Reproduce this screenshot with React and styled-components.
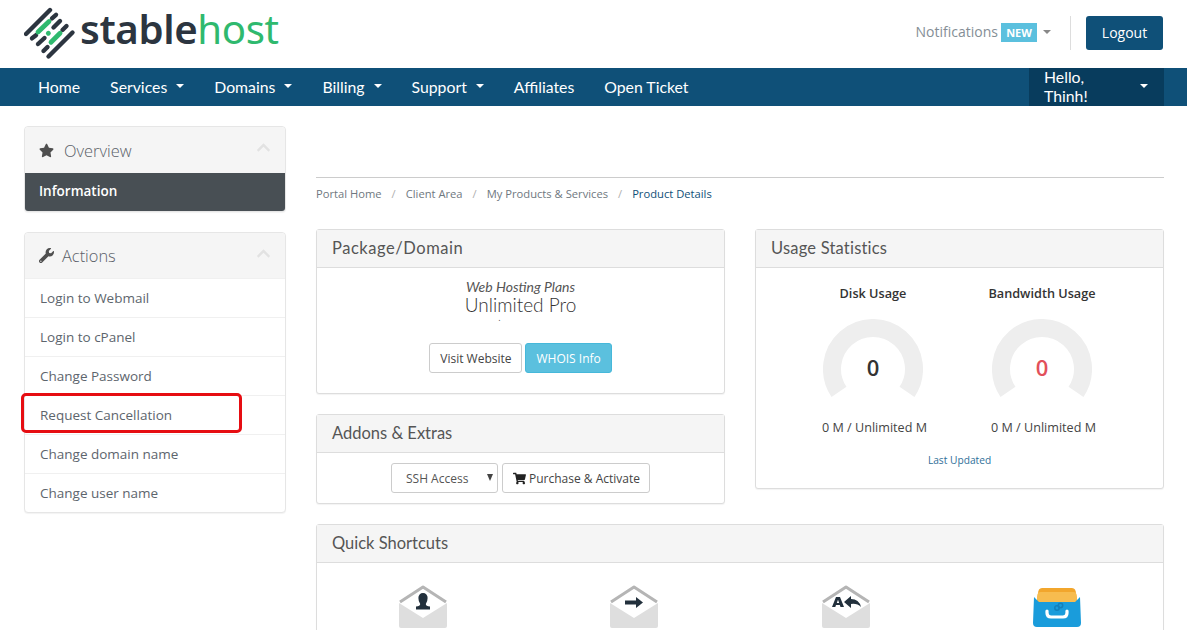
import React from "react";
import styled, { createGlobalStyle } from "styled-components";
import { FaStar, FaWrench, FaShoppingCart, FaChevronUp } from "react-icons/fa";

const Global = createGlobalStyle`
  html, body { margin: 0; padding: 0; background: #fff; overflow: hidden; }
  * { box-sizing: border-box; }
  #root { width: 1187px; height: 630px; overflow: hidden; font-family: "Open Sans", sans-serif; color: #333; }
`;

const Display = `"Lato", "Open Sans", sans-serif`;

const Header = styled.header`
  height: 68px; display: flex; align-items: flex-start; justify-content: space-between; padding: 0 24px;
`;
const Logo = styled.div`display: flex; align-items: center; height: 62px; gap: 0;`;
const LogoText = styled.div`
  font-family: "Noto Sans", sans-serif; font-size: 40.2px; line-height: 62px; letter-spacing: -0.4px;
  margin-top: -4px; margin-left: 3px; font-weight: 600; color: #2c3540;
  span { font-weight: 400; color: #2fb96e; }
`;
const HeaderRight = styled.div`display: flex; align-items: center; height: 34px; margin-top: 16px;`;
const Notif = styled.div`display: flex; align-items: center; font-size: 14px; color: #848e96; margin-right: 19px; margin-top: -2px; line-height: 19px;`;
const NotifText = styled.span`position: relative; top: -1px;`;
const NewBadge = styled.span`
  background: #5bc0de; color: #fff; font-size: 11px; font-weight: 700; height: 19px; line-height: 19px; width: 36px;
  text-align: center; margin-left: 3px;
`;
const Caret = styled.span`
  display: inline-block; width: 0; height: 0; border-left: 4px solid transparent; border-right: 4px solid transparent;
  border-top: 4px solid ${p => p.$color || "#fff"}; margin-left: ${p => p.$gap || 9}px;
`;
const VDivider = styled.div`width: 1px; height: 34px; background: #ddd; margin-right: 15px;`;
const LogoutBtn = styled.button`
  width: 77px; height: 34px; background: #0f5078; color: #fff; border: 0; border-radius: 3px; padding: 0 0 2px;
  font: 400 14px "Open Sans", sans-serif;
`;
const Nav = styled.nav`
  height: 38px; background: #0f5078; display: flex; justify-content: space-between; padding: 0 23px 0 23px;
`;
const NavList = styled.div`display: flex;`;
const NavItem = styled.a`
  display: flex; align-items: center; padding: 0 15px 2px; font: 400 15.8px ${Display}; color: #fff;
`;
const Hello = styled(NavItem)`width: 135px; background: #083c5d; justify-content: space-between; padding-right: 16px;`;

const Content = styled.div`
  display: grid; grid-template-columns: 262px 848px; column-gap: 30px; padding: 20px 0 0 24px;
`;
const Side = styled.aside`display: flex; flex-direction: column; gap: 20px;`;
const SidePanel = styled.section`
  border: 1px solid #e6e6e6; border-radius: 4px; background: #fff; box-shadow: 0 1px 1px rgba(0,0,0,.05);
`;
const SideHead = styled.div`
  height: ${p => p.$h}px; background: #f5f5f5; display: flex; align-items: center; padding: 0 14px; gap: ${p => p.$gap}px;
  font: 300 16.4px "Open Sans", sans-serif; color: #5a6068; border-radius: 4px 4px 0 0;
  > svg:first-child { color: #4f4f4f; font-size: 15px; }
  > svg:last-child { margin-left: auto; color: #e2e2e2; font-size: 15px; margin-top: -5px; }
`;
const ActiveItem = styled.div`
  height: 38px; background: #484f54; color: #fff; font-size: 13.5px; font-weight: 600; display: flex; align-items: center;
  padding: 0 0 2px 14px; border-radius: 0 0 3px 3px;
`;
const MenuItem = styled.div`
  position: relative; height: 39px; border-top: 1px solid #f0f0f0; font-size: 13.5px; color: #5d656d; display: flex; align-items: center;
  padding: 0 0 1px 15px;
  &:first-of-type { border-top: 0; }
`;
const RedMark = styled.span`
  position: absolute; left: -4px; top: -3px; width: 221px; height: 40px; border: 3px solid #e60d12; border-radius: 5px;
`;

const Main = styled.main`padding-top: 51px;`;
const Crumbs = styled.div`
  border-top: 1px solid #ccc; height: 52px; padding-top: 8px; font-size: 11.2px; color: #6f7880; display: flex; gap: 10px; line-height: 15px;
  span { color: #b0b0b0; }
  b { font-weight: 400; color: #0f5078; }
`;
const Cols = styled.div`display: grid; grid-template-columns: 409px 409px; column-gap: 30px; align-items: start;`;
const Stack = styled.div`display: flex; flex-direction: column; gap: 20px;`;
const Panel = styled.section`
  border: 1px solid #ddd; border-radius: 3px; background: #fff; box-shadow: 0 1px 1px rgba(0,0,0,.05);
`;
const PanelHead = styled.div`
  height: 38px; background: #f5f5f5; border-bottom: 1px solid #ddd; display: flex; align-items: center; padding: 0 15px 2px;
  font: 400 16.5px ${Display}; color: #555; letter-spacing: ${p => p.$spread || 0}px;
`;
const PackageBody = styled.div`height: 125px; padding-top: 10px; display: flex; flex-direction: column; align-items: center;`;
const PlanGroup = styled.div`font: italic 400 14px ${Display}; color: #555; line-height: 17px;`;
const PlanName = styled.div`font: 300 19px ${Display}; color: #333; line-height: 20px;`;
const Dot = styled.div`font-size: 9px; line-height: 6px; height: 28px; color: #555; margin-right: 42px;`;
const Buttons = styled.div`display: flex; gap: 3px; align-items: center;`;
const Btn = styled.button`
  height: 30px; padding: 0 ${p => (p.$tight ? 9 : 10)}px 0 10px; border-radius: 3px; font: 400 12px "Open Sans", sans-serif; display: inline-flex; align-items: center; gap: 3px;
  border: 1px solid ${p => (p.$info ? "#46b8da" : "#ccc")};
  background: ${p => (p.$info ? "#5bc0de" : "#fff")};
  color: ${p => (p.$info ? "#fff" : "#444")};
`;
const AddonBody = styled.div`height: 50px; display: flex; align-items: center; justify-content: center; gap: 4px;`;
const SelectWrap = styled.div`position: relative; width: 107px; height: 30px;`;
const Select = styled.select`
  appearance: none; width: 100%; height: 100%; border: 1px solid #ccc; border-radius: 3px; background: #fff; color: #555;
  font: 400 12px "Open Sans", sans-serif; padding: 0 14px;
`;
const SelectArrow = styled.span`
  position: absolute; right: 5px; top: 11px; width: 0; height: 0;
  border-left: 3.5px solid transparent; border-right: 3.5px solid transparent; border-top: 7px solid #444;
`;
const UsageBody = styled.div`height: 220px; padding-top: 16px; display: flex; flex-direction: column; align-items: center;`;
const GaugeRow = styled.div`display: grid; grid-template-columns: 169px 169px; margin-right: 4px;`;
const GaugeCol = styled.div`display: flex; flex-direction: column; align-items: center;`;
const GaugeTitle = styled.div`font-size: 12.7px; font-weight: 600; color: #333; line-height: 18px; margin-bottom: 17px;`;
const GaugeBox = styled.div`position: relative; width: 100px; height: 80px;`;
const GaugeValue = styled.div`
  position: absolute; left: 0; right: 0; top: 34px; text-align: center; font-size: 22px; line-height: 28px; font-weight: 600;
  color: ${p => p.$color};
`;
const GaugeLabel = styled.div`font-size: 12.6px; color: #444; line-height: 18px; margin: 20px 0 0 3px;`;
const Updated = styled.div`font-size: 10.2px; color: #2f6f99; line-height: 14px; margin-top: 16px;`;
const ShortcutGrid = styled.div`display: grid; grid-template-columns: repeat(4, 1fr); height: 100px;`;
const Shortcut = styled.div`display: flex; justify-content: center; padding-top: 22px;`;
const QuickWrap = styled.div`margin-top: 20px;`;

const LogoMark = () => {
  const dark = [[26,34,50,10],[52,18.3,56,14.8],[32,38.3,36,35.2],[53.5,27.5,60,21],[38,44,44.5,38],[62.5,30,66.5,26],[43.5,51,47.5,47],[48.5,56.5,72.5,32.5]];
  const green = [[38,32,49,21.5],[48.3,33.3,48.4,33.2],[51,42.3,60,33.3]];
  return (
    <svg width="53" height="62" viewBox="24 0 53 62">
      {dark.map((l, i) => <line key={i} x1={l[0]} y1={l[1]} x2={l[2]} y2={l[3]} stroke="#2c3540" strokeWidth="4.4" strokeLinecap="round" />)}
      {green.map((l, i) => <line key={i} x1={l[0]} y1={l[1]} x2={l[2]} y2={l[3]} stroke="#2fb96e" strokeWidth="4.8" strokeLinecap="round" />)}
    </svg>
  );
};

const Gauge = ({ color }) => (
  <GaugeBox>
    <svg width="100" height="80" viewBox="0 0 100 80">
      <path d="M16 72.9 A41 41 0 1 1 84 72.9" fill="none" stroke="#eeeeee" strokeWidth="18" />
    </svg>
    <GaugeValue $color={color}>0</GaugeValue>
  </GaugeBox>
);

const Envelope = ({ children }) => (
  <svg width="48" height="44" viewBox="0 0 48 44">
    <path d="M0 18 L24 33 L48 18 V41 a2 2 0 0 1 -2 2 H2 a2 2 0 0 1 -2 -2 Z" fill="#dedede" />
    <path d="M1 17 L24 2 L47 17 L24 32 Z" fill="#fff" />
    <path d="M1 17 L24 2 L47 17" fill="none" stroke="#b5b5b5" strokeWidth="3" strokeLinejoin="round" />
    {children}
  </svg>
);

const Cabinet = () => (
  <svg width="48" height="44" viewBox="0 0 48 44">
    <path d="M5 9 Q5 3 9 3 H39 Q43 3 43 9 V14 H5 Z" fill="#f2a62c" />
    <path d="M4 12 Q4 7 8 7 H40 Q44 7 44 12 V20 H4 Z" fill="#f7bc4f" />
    <path d="M1 12 L6 17 H42 L47 12 L48 38 Q48 42 44 42 H4 Q0 42 0 38 Z" fill="#1a9cdb" />
    <path d="M14 26 V28 Q14 32 18 32 H30 Q34 32 34 28 V26" fill="none" stroke="#fff" strokeWidth="3.2" strokeLinecap="round" />
    <circle cx="24" cy="23" r="2.2" fill="none" stroke="#1480bb" strokeWidth="1.5" />
    <circle cx="27.5" cy="20.5" r="2.2" fill="none" stroke="#1480bb" strokeWidth="1.5" />
  </svg>
);

const Ink = "#22303c";

export default function App() {
  return (
    <>
      <Global />
      <Header>
        <Logo>
          <LogoMark />
          <LogoText>stable<span>host</span></LogoText>
        </Logo>
        <HeaderRight>
          <Notif><NotifText>Notifications</NotifText><NewBadge>NEW</NewBadge><Caret $color="#888" $gap={6} /></Notif>
          <VDivider />
          <LogoutBtn>Logout</LogoutBtn>
        </HeaderRight>
      </Header>
      <Nav>
        <NavList>
          <NavItem>Home</NavItem>
          <NavItem>Services<Caret /></NavItem>
          <NavItem>Domains<Caret /></NavItem>
          <NavItem>Billing<Caret /></NavItem>
          <NavItem>Support<Caret /></NavItem>
          <NavItem>Affiliates</NavItem>
          <NavItem>Open Ticket</NavItem>
        </NavList>
        <Hello>Hello, Thinh!<Caret /></Hello>
      </Nav>
      <Content>
        <Side>
          <SidePanel>
            <SideHead $h={46} $gap={10}><FaStar />Overview<FaChevronUp /></SideHead>
            <ActiveItem>Information</ActiveItem>
          </SidePanel>
          <SidePanel>
            <SideHead $h={45} $gap={8}><FaWrench />Actions<FaChevronUp /></SideHead>
            <MenuItem>Login to Webmail</MenuItem>
            <MenuItem>Login to cPanel</MenuItem>
            <MenuItem>Change Password</MenuItem>
            <MenuItem>Request Cancellation<RedMark /></MenuItem>
            <MenuItem>Change domain name</MenuItem>
            <MenuItem>Change user name</MenuItem>
          </SidePanel>
        </Side>
        <Main>
          <Crumbs>
            Portal Home<span>/</span>Client Area<span>/</span>My Products &amp; Services<span>/</span><b>Product Details</b>
          </Crumbs>
          <Cols>
            <Stack>
              <Panel>
                <PanelHead $spread={0.55}>Package/Domain</PanelHead>
                <PackageBody>
                  <PlanGroup>Web Hosting Plans</PlanGroup>
                  <PlanName>Unlimited Pro</PlanName>
                  <Dot>.</Dot>
                  <Buttons>
                    <Btn>Visit Website</Btn>
                    <Btn $info>WHOIS Info</Btn>
                  </Buttons>
                </PackageBody>
              </Panel>
              <Panel>
                <PanelHead>Addons &amp; Extras</PanelHead>
                <AddonBody>
                  <SelectWrap>
                    <Select defaultValue="ssh"><option value="ssh">SSH Access</option></Select>
                    <SelectArrow />
                  </SelectWrap>
                  <Btn $tight><FaShoppingCart size={13} color="#222" />Purchase &amp; Activate</Btn>
                </AddonBody>
              </Panel>
            </Stack>
            <Panel>
              <PanelHead $spread={0.2}>Usage Statistics</PanelHead>
              <UsageBody>
                <GaugeRow>
                  <GaugeCol>
                    <GaugeTitle>Disk Usage</GaugeTitle>
                    <Gauge color="#333" />
                    <GaugeLabel>0 M / Unlimited M</GaugeLabel>
                  </GaugeCol>
                  <GaugeCol>
                    <GaugeTitle>Bandwidth Usage</GaugeTitle>
                    <Gauge color="#e2505a" />
                    <GaugeLabel>0 M / Unlimited M</GaugeLabel>
                  </GaugeCol>
                </GaugeRow>
                <Updated>Last Updated</Updated>
              </UsageBody>
            </Panel>
          </Cols>
          <QuickWrap>
            <Panel>
              <PanelHead>Quick Shortcuts</PanelHead>
              <ShortcutGrid>
                <Shortcut>
                  <Envelope>
                    <path d="M24 8 a4.6 4.6 0 0 1 4.6 5 q0 3.5 -1.8 6 q0 2 4.2 2.6 v2.9 H17 v-2.9 q4.2 -.6 4.2 -2.6 q-1.8 -2.5 -1.8 -6 a4.6 4.6 0 0 1 4.6 -5 Z" fill={Ink} />
                  </Envelope>
                </Shortcut>
                <Shortcut>
                  <Envelope>
                    <path d="M15 15.5 H26 V12 L33 17.5 L26 23 V19.5 H15 Z" fill={Ink} />
                  </Envelope>
                </Shortcut>
                <Shortcut>
                  <Envelope>
                    <path d="M14 12 H18 L22 22 H18.5 L17.8 20 H14 L13.3 22 H10 Z M16 14.8 L14.8 18 H17.2 Z" fill={Ink} fillRule="evenodd" />
                    <path d="M29 11 L22 17 L29 23 V19 Q35 18 39 22 Q37 14 29 14 Z" fill={Ink} />
                  </Envelope>
                </Shortcut>
                <Shortcut><Cabinet /></Shortcut>
              </ShortcutGrid>
            </Panel>
          </QuickWrap>
        </Main>
      </Content>
    </>
  );
}
